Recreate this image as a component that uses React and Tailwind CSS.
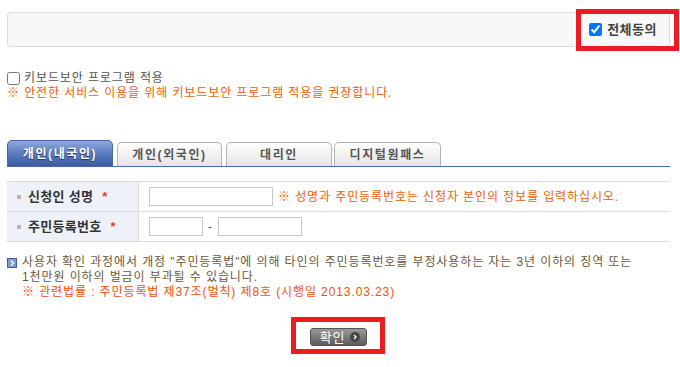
const TABS = [
  { label: '개인(내국인)', active: true, cls: 'w-[106px]' },
  { label: '개인(외국인)', active: false, cls: 'w-[105px] ml-[4px]' },
  { label: '대리인', active: false, cls: 'w-[106px] ml-[4px]' },
  { label: '디지털원패스', active: false, cls: 'w-[107px] ml-[2px]' },
];

const Bullet = () => <span className="w-[4px] h-[4px] bg-[#b4b4b4] shrink-0"></span>;

const Star = () => <span className="text-[#e8403a] text-[13px] font-bold ml-[2px]">*</span>;

const NoticeIcon = () => (
  <svg width="10" height="10" viewBox="0 0 10 10" className="shrink-0 mt-[3px]">
    <rect x="0.5" y="0.5" width="9" height="9" fill="#7d9ad2" stroke="#3f5fa6" />
    <path d="M4 2.5 L6.5 5 L4 7.5" fill="none" stroke="#fff" strokeWidth="1.4" />
  </svg>
);

const ArrowDot = () => (
  <svg width="10" height="10" viewBox="0 0 10 10">
    <circle cx="5" cy="5" r="5" fill="#454545" />
    <path d="M4 3 L6 5 L4 7" fill="none" stroke="#fff" strokeWidth="1.3" />
  </svg>
);

export default function App() {
  return (
    <div className="relative w-[680px] h-[367px] overflow-hidden bg-white pt-[12px] pl-[7px] pr-[10px] text-[12px] tracking-[0.9px] font-['Liberation_Sans','Noto_Sans_CJK_KR',sans-serif]">
      {/* 전체동의 */}
      <div className="h-[35px] border border-[#dddddd] rounded-[3px] bg-[#f8f8f8] flex items-center justify-end pr-[12px]">
        <label className="flex items-center gap-[5px]">
          <input type="checkbox" defaultChecked className="m-0 w-[13px] h-[13px]" />
          <span className="text-[13px] font-bold text-[#444] tracking-[0.5px] leading-[15px]">전체동의</span>
        </label>
      </div>
      <div className="absolute left-[576px] top-[9px] w-[103px] h-[42px] border-[5px] border-[#ec1c24]"></div>

      {/* 키보드보안 */}
      <div className="mt-[24px]">
        <label className="flex items-center gap-[4px] leading-[15px] text-[#555]">
          <input type="checkbox" className="m-0 w-[13px] h-[13px]" />
          <span>키보드보안 프로그램 적용</span>
        </label>
        <p className="leading-[15px] text-[#ee5f06]">※ 안전한 서비스 이용을 위해 키보드보안 프로그램 적용을 권장합니다.</p>
      </div>

      {/* tabs */}
      <div className="mt-[39px] h-[27px] flex items-end border-b border-[#4b6bb2]">
        {TABS.map((tab) =>
          tab.active ? (
            <div
              key={tab.label}
              className={`${tab.cls} h-[27px] -mb-px rounded-t-[5px] border border-[#4866ab] bg-gradient-to-b from-[#8ea9dc] via-[#5b7bbf] to-[#3d5c9f] flex items-center justify-center text-white font-bold tracking-[1.6px] [text-shadow:0_1px_1px_#1e3260]`}
            >
              {tab.label}
            </div>
          ) : (
            <div
              key={tab.label}
              className={`${tab.cls} h-[24px] rounded-t-[5px] border border-b-0 border-[#b3b3b3] bg-gradient-to-b from-white to-[#e4e4e4] flex items-center justify-center text-[#555] font-bold tracking-[1.6px]`}
            >
              {tab.label}
            </div>
          )
        )}
      </div>

      {/* form table */}
      <div className="mt-[14px] border-t border-[#dcdcdc]">
        <div className="flex h-[30px] border-b border-[#dcdcdc]">
          <div className="w-[132px] shrink-0 bg-[#eef2f8] border-r border-[#dcdcdc] flex items-center pl-[10px] gap-[7px]">
            <Bullet />
            <span className="text-[13px] font-bold text-[#333] tracking-[0.3px]">신청인 성명</span>
            <Star />
          </div>
          <div className="flex items-center pl-[10px] gap-[5px]">
            <input type="text" className="w-[124px] h-[19px] border border-[#c9c9c9] outline-none" />
            <span className="text-[#ee5f06]">※ 성명과 주민등록번호는 신청자 본인의 정보를 입력하십시오.</span>
          </div>
        </div>
        <div className="flex h-[30px] border-b border-[#dcdcdc]">
          <div className="w-[132px] shrink-0 bg-[#eef2f8] border-r border-[#dcdcdc] flex items-center pl-[10px] gap-[7px]">
            <Bullet />
            <span className="text-[13px] font-bold text-[#333] tracking-[0.3px]">주민등록번호</span>
            <Star />
          </div>
          <div className="flex items-center pl-[10px]">
            <input type="text" className="w-[54px] h-[19px] border border-[#c9c9c9] outline-none" />
            <span className="w-[15px] text-center text-[#555]">-</span>
            <input type="text" className="w-[84px] h-[19px] border border-[#c9c9c9] outline-none" />
          </div>
        </div>
      </div>

      {/* notice */}
      <div className="mt-[13px] flex gap-[5px] leading-[15px]">
        <NoticeIcon />
        <div>
          <p className="text-[#6b5837]">
            사용자 확인 과정에서 개정 "주민등록법"에 의해 타인의 주민등록번호를 부정사용하는 자는 3년 이하의 징역 또는
            <br />
            1천만원 이하의 벌금이 부과될 수 있습니다.
          </p>
          <p className="text-[#ee5306]">※ 관련법률 : 주민등록법 제37조(벌칙) 제8호 (시행일 2013.03.23)</p>
        </div>
      </div>

      {/* confirm button */}
      <div className="mt-[28px] flex justify-center">
        <div className="relative">
          <button className="h-[18px] pl-[9px] pr-[6px] flex items-center gap-[5px] rounded-[3px] border border-[#555] bg-gradient-to-b from-[#9a9a9a] to-[#5c5c5c] text-white text-[13px] leading-none">
            확인
            <ArrowDot />
          </button>
          <div className="absolute -left-[19px] -right-[18px] -top-[11px] -bottom-[8px] border-[5px] border-[#ec1c24]"></div>
        </div>
      </div>
    </div>
  );
}
